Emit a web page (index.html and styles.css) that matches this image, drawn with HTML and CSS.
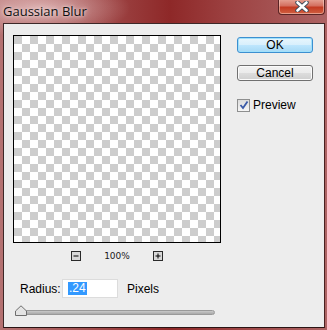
FILE: index.html
```html
<!DOCTYPE html>
<html>
<head>
<meta charset="utf-8">
<link rel="stylesheet" href="styles.css">
</head>
<body>
<div class="window">
  <div class="titlebar">
    <span class="title">Gaussian Blur</span>
    <div class="close"><svg width="14" height="11" viewBox="0 0 14 11"><path d="M2.5 1.5 L11.5 9.5 M11.5 1.5 L2.5 9.5" stroke="#3a4a5a" stroke-width="4.4" stroke-linecap="round"/><path d="M2.5 1.5 L11.5 9.5 M11.5 1.5 L2.5 9.5" stroke="#fff" stroke-width="2.6" stroke-linecap="round"/></svg></div>
  </div>
  <div class="panel">
    <div class="top">
      <div class="left">
        <div class="preview"></div>
        <div class="zoom">
          <span class="zbtn"><svg width="8" height="8" viewBox="0 0 8 8"><rect x="1.5" y="3.5" width="5" height="1" fill="#000"/></svg></span>
          <span class="zval">100%</span>
          <span class="zbtn"><svg width="8" height="8" viewBox="0 0 8 8"><rect x="1.5" y="3.5" width="5" height="1" fill="#000"/><rect x="3.5" y="1.5" width="1" height="5" fill="#000"/></svg></span>
        </div>
      </div>
      <div class="side">
        <div class="btn ok">OK</div>
        <div class="btn cancel">Cancel</div>
        <label class="check"><span class="box"><svg width="10" height="10" viewBox="0 0 10 10"><path d="M1.5 5 L4 8 L8.5 1.5" stroke="#3a5aa8" stroke-width="1.8" fill="none"/></svg></span>Preview</label>
      </div>
    </div>
    <div class="radius">
      <span class="lbl">Radius:</span>
      <span class="input"><span class="sel">.24</span></span>
      <span class="unit">Pixels</span>
    </div>
    <div class="slider">
      <div class="track"></div>
      <svg class="thumb" width="12" height="11" viewBox="0 0 12 11"><path d="M0.5 10.5 V6 L6 0.8 L11.5 6 V10.5 Z" fill="#e4e4e4" stroke="#6e6e6e" stroke-width="1"/></svg>
    </div>
  </div>
</div>
</body>
</html>
```

FILE: styles.css
```css
html, body { margin: 0; padding: 0; }
body { width: 327px; height: 330px; overflow: hidden; font-family: "Open Sans", "Liberation Sans", sans-serif; }
.window {
  width: 327px; height: 330px; box-sizing: border-box;
  padding: 0 2px 2px 3px;
  display: flex; flex-direction: column;
  background:
    radial-gradient(ellipse 90px 30px at 40px 8px, rgba(235,200,200,0.75), rgba(235,200,200,0) 100%),
    linear-gradient(90deg, #b57272 0%, #a65656 22%, #8e2828 52%, #9e4444 72%, #ad6464 100%);
}
.titlebar { height: 23px; position: relative; flex: none; }
.title {
  position: absolute; left: 0; top: 2px;
  font-size: 13px; color: #101010;
  text-shadow: 0 0 6px #f3dede, 0 0 3px #f3dede;
}
.close {
  position: absolute; right: 0; top: -1px; width: 47px; height: 16px;
  border: 1px solid #5a2424; border-top: none; border-radius: 0 0 4px 4px; box-sizing: border-box;
  background: linear-gradient(#e7a597 0%, #d47060 45%, #c33a22 55%, #d06040 100%);
  display: flex; align-items: center; justify-content: center;
  box-shadow: inset 0 0 0 1px rgba(255,220,210,0.5);
}
.panel {
  flex: 1; background: #ededed; border: 1px solid #3d2828;
  border-right-color: #4a2020; border-bottom-color: #2a1414;
  padding: 11px 0 0 9px;
}
.top { display: flex; }
.left { display: flex; flex-direction: column; width: 208px; }
.preview {
  width: 206px; height: 206px; border: 1px solid #000;
  background-color: #fff;
  background-image:
    linear-gradient(45deg, #cdcdcd 25%, transparent 25%, transparent 75%, #cdcdcd 75%),
    linear-gradient(45deg, #cdcdcd 25%, transparent 25%, transparent 75%, #cdcdcd 75%);
  background-size: 16px 16px;
  background-position: 8px 0, 0 8px;
}
.zoom { display: flex; justify-content: center; align-items: center; margin-top: 8px; height: 10px; }
.zbtn {
  width: 8px; height: 8px; border: 1px solid #2a2a2a; background: #d8d8d8;
  display: flex;
}
.zval { width: 72px; text-align: center; font-size: 9px; font-family: "DejaVu Sans", sans-serif; color: #1a1a1a; line-height: 10px; }
.side { margin-left: 16px; padding-top: 2px; display: flex; flex-direction: column; }
.btn {
  width: 76px; height: 16px; box-sizing: border-box; border-radius: 3px;
  font-size: 12px; line-height: 14px; text-align: center; color: #000;
  font-family: "Liberation Sans", sans-serif;
}
.ok {
  border: 1px solid #3c8fd0;
  background: linear-gradient(#e8f6fd 0%, #d8effc 50%, #bee6fd 51%, #a7d9f5 100%);
  box-shadow: inset 0 0 0 1px #9fe0fb;
}
.cancel {
  margin-top: 12px;
  border: 1px solid #707070;
  background: linear-gradient(#f2f2f2 0%, #ebebeb 50%, #dddddd 51%, #cfcfcf 100%);
  box-shadow: inset 0 0 0 1px #fbfbfb;
}
.check { margin-top: 17px; display: flex; align-items: center; font-size: 12px; font-family: "Liberation Sans", sans-serif; color: #000; }
.box {
  width: 11px; height: 11px; border: 1px solid #8e8f8f; background: linear-gradient(#dcdcdc, #f6f6f6);
  display: flex; align-items: center; justify-content: center; margin-right: 3px;
}
.radius { display: flex; align-items: center; margin-top: 18px; padding-left: 7px; height: 19px; font-size: 12px; font-family: "Liberation Sans", sans-serif; color: #000; }
.lbl { width: 42px; }
.input {
  width: 49px; height: 17px; background: #fff; border: 1px solid #dcdcdc;
  display: flex; align-items: center; padding-left: 5px; box-sizing: content-box;
}
.sel { background: #3399ff; color: #fff; padding: 0 1px; line-height: 13px; height: 13px; }
.unit { margin-left: 9px; }
.slider { position: relative; margin: 7px 0 0 2px; width: 200px; height: 11px; }
.track {
  position: absolute; left: 1px; right: 0; top: 5px; height: 5px; border-radius: 3px;
  background: linear-gradient(#c9c9c9, #a9a9a9); border: 1px solid #9a9a9a; box-sizing: border-box;
}
.thumb { position: absolute; left: 0; top: 0; }
```
